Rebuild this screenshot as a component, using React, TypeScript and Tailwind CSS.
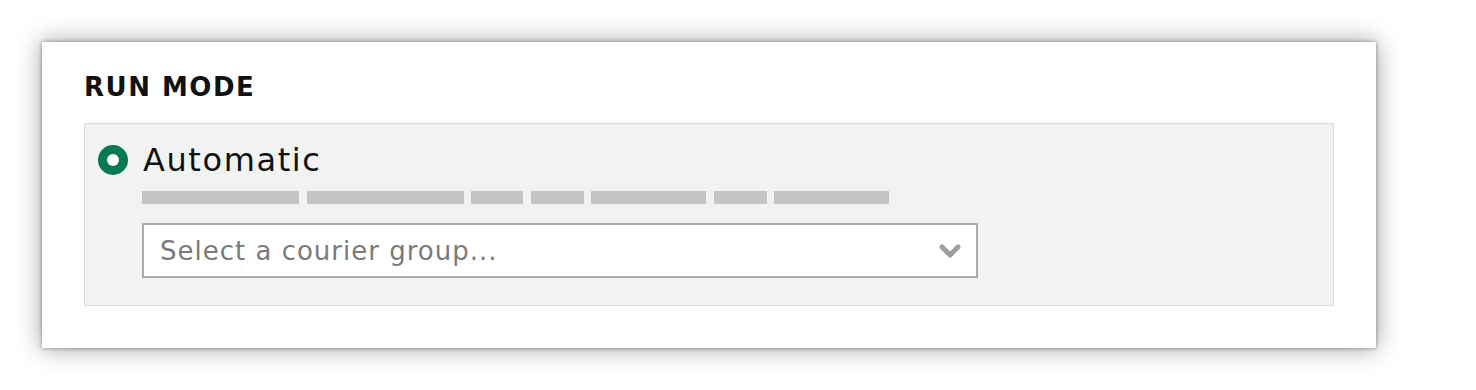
import React from "react";

const bars = [157, 157, 52, 53, 115, 53, 115];

export default function App() {
  return (
    <div
      className="w-[1476px] h-[390px] bg-white pt-[42px] pl-[42px]"
      style={{ fontFamily: "'DejaVu Sans', 'Open Sans', sans-serif" }}
    >
      <div className="w-[1334px] h-[306px] bg-white px-[42px] pt-[30px] shadow-[0_0_4px_rgba(0,0,0,0.4),0_0_24px_rgba(0,0,0,0.38)]">
        <div className="text-[26px] leading-[30px] font-semibold text-[#111111] tracking-[1.5px] mb-[21px]">
          RUN MODE
        </div>
        <div className="h-[183px] border border-[#d6dce2] bg-[#f1f3f2] pt-[16px] pl-[13px]">
          <div className="flex items-center h-[40px]">
            <div className="w-[30px] h-[30px] rounded-full bg-[#077a52] flex items-center justify-center">
              <div className="w-[12px] h-[12px] rounded-full bg-white" />
            </div>
            <div className="ml-[15px] text-[32px] leading-[40px] text-[#111111] tracking-[1.6px]">
              Automatic
            </div>
          </div>
          <div className="flex gap-[7.5px] mt-[11px] ml-[44px]">
            {bars.map((w, i) => (
              <div key={i} className="h-[13px] bg-[#c4c4c4]" style={{ width: w }} />
            ))}
          </div>
          <div className="mt-[19px] ml-[44px] w-[836px] h-[55px] border-2 border-[#ababab] bg-white flex items-center justify-between pl-[16px] pr-[14px]">
            <span className="text-[26px] leading-[30px] text-[#7a7a7a] tracking-[1px]">
              Select a courier group...
            </span>
            <svg width="24" height="16" viewBox="0 0 24 16">
              <polyline
                points="4,4 12,12 20,4"
                fill="none"
                stroke="#9e9e9e"
                strokeWidth="5"
                strokeLinecap="round"
                strokeLinejoin="round"
              />
            </svg>
          </div>
        </div>
      </div>
    </div>
  );
}
